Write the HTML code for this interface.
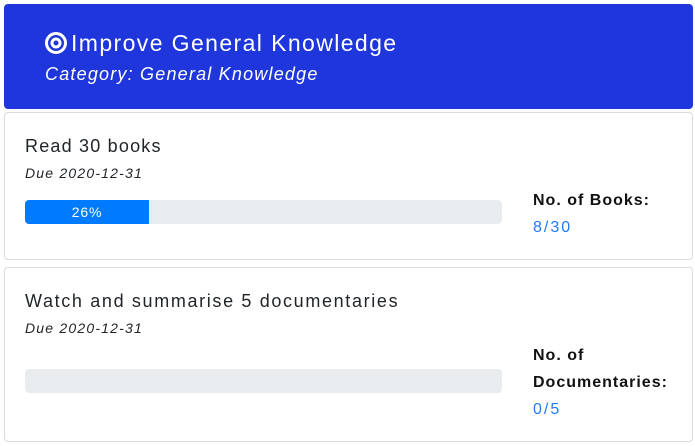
<!DOCTYPE html>
<html><head><style>
body{margin:0;width:695px;height:446px;background:#fff;font-family:"Liberation Sans",sans-serif;position:relative;overflow:hidden}
.a{position:absolute;white-space:nowrap}
.hdr{position:absolute;left:4px;top:4px;width:689px;height:105px;background:#1e36db;border-radius:4px}
.card{position:absolute;left:4px;width:687px;border:1px solid #dcdcdc;border-radius:4px}
.bar{position:absolute;left:25px;width:477px;height:24px;background:#e9ecef;border-radius:4px;overflow:hidden}
.fill{position:absolute;left:0;top:0;height:100%;background:#007bff;color:#fff;font-size:14px;line-height:24px;text-align:center;letter-spacing:0.8px}
.t{font-size:18px;color:#212529}
.d{font-size:14px;font-style:italic;color:#212529;letter-spacing:1.2px}
.b{font-size:16px;font-weight:bold;color:#111;letter-spacing:1px}
.v{font-size:16px;color:#1e7bf7;letter-spacing:2px}
</style></head><body>
<div class="hdr"></div>
<svg class="a" style="left:44px;top:31px" width="24" height="24" viewBox="0 0 24 24"><circle cx="12" cy="12" r="9.5" fill="none" stroke="#fff" stroke-width="3"/><circle cx="12" cy="12" r="4" fill="none" stroke="#fff" stroke-width="3"/></svg>
<div class="a" style="left:71px;top:30px;font-size:23px;color:#fff;letter-spacing:1.4px">Improve General Knowledge</div>
<div class="a" style="left:45px;top:64px;font-size:18px;font-style:italic;color:#fff;letter-spacing:1.2px">Category: General Knowledge</div>

<div class="card" style="top:112px;height:146px"></div>
<div class="a t" style="left:25px;top:136px;letter-spacing:1.2px">Read 30 books</div>
<div class="a d" style="left:25px;top:165px">Due 2020-12-31</div>
<div class="bar" style="top:200px"><div class="fill" style="width:124px">26%</div></div>
<div class="a b" style="left:533px;top:192px">No. of Books:</div>
<div class="a v" style="left:533px;top:219px">8/30</div>

<div class="card" style="top:267px;height:173px"></div>
<div class="a t" style="left:25px;top:291px;letter-spacing:1.65px">Watch and summarise 5 documentaries</div>
<div class="a d" style="left:25px;top:320px">Due 2020-12-31</div>
<div class="bar" style="top:369px"></div>
<div class="a b" style="left:533px;top:347px">No. of</div>
<div class="a b" style="left:533px;top:374px">Documentaries:</div>
<div class="a v" style="left:533px;top:401px">0/5</div>
</body></html>
